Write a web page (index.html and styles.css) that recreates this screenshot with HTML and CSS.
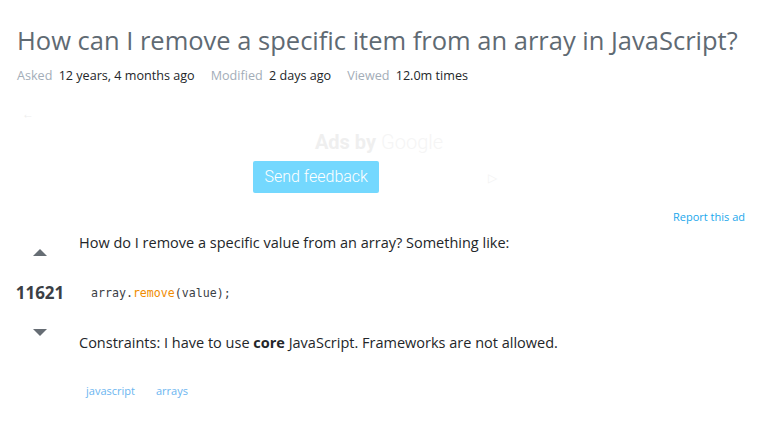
FILE: index.html
```html
<!DOCTYPE html>
<html>
<head>
<meta charset="utf-8">
<link rel="stylesheet" href="styles.css">
</head>
<body>
<div class="page">
  <h1 class="title">How can I remove a specific item from an array in JavaScript?</h1>
  <div class="meta">
    <span class="meta-item"><span class="label">Asked</span> 12 years, 4 months ago</span>
    <span class="meta-item"><span class="label">Modified</span> 2 days ago</span>
    <span class="meta-item"><span class="label">Viewed</span> 12.0m times</span>
  </div>
  <div class="ad">
    <div class="ad-back">&#8592;</div>
    <div class="ads-by"><b>Ads by</b> <span class="google">Google</span></div>
    <div class="ad-row">
      <span class="feedback">Send feedback</span>
      <span class="play">&#9655;</span>
    </div>
    <div class="report-row"><span class="report">Report this ad</span></div>
  </div>
  <div class="post">
    <div class="votecell">
      <span class="tri up"></span>
      <span class="count">11621</span>
      <span class="tri down"></span>
    </div>
    <div class="postbody">
      <p class="line">How do I remove a specific value from an array? Something like:</p>
      <pre class="code">array.<span class="fn">remove</span>(value);</pre>
      <p class="line">Constraints: I have to use <b>core</b> JavaScript. Frameworks are not allowed.</p>
      <div class="tags"><span class="tag">javascript</span><span class="tag">arrays</span></div>
    </div>
  </div>
</div>
</body>
</html>
```
FILE: styles.css
```css
html, body { margin: 0; padding: 0; background: #fff; }
body { font-family: "Open Sans", "Noto Sans", sans-serif; color: #232629; }
.page { padding: 20px 0 0 17px; width: 752px; box-sizing: border-box; }
.title { margin: 0; font-weight: 400; font-size: 25.5px; line-height: 40px; color: #5f6a73; white-space: nowrap; }
.meta { display: flex; gap: 16px; font-size: 12.6px; line-height: 30px; margin-top: 1px; }
.meta .label { color: #a3adb8; margin-right: 3px; }
.ad { position: relative; height: 137px; display: flex; flex-direction: column; }
.ad-back { position: absolute; left: 5px; top: 14px; color: #ededed; font-size: 12px; }
.ads-by { font-family: Roboto, sans-serif; font-size: 20px; color: #efefef; line-height: 24px; margin-top: 39px; text-align: center; padding-right: 11px; }
.ads-by b { font-weight: 700; }
.google { color: #f5f5f5; font-weight: 300; }
.ad-row { display: flex; align-items: center; margin-top: 7px; padding-left: 236px; gap: 109px; }
.feedback { display: block; background: #74d8fe; color: #fff; font-family: Roboto, sans-serif; font-weight: 300; font-size: 16px; line-height: 32px; padding: 0 11.5px; border-radius: 2px; }
.play { color: #f3f3f3; font-size: 12px; }
.report-row { display: flex; justify-content: flex-end; margin-top: auto; padding-right: 7px; padding-bottom: 4px; }
.report { font-size: 11px; color: #1aa7ec; }
.post { display: flex; }
.votecell { width: 46px; display: flex; flex-direction: column; align-items: center; padding-top: 21px; margin-right: 16px; }
.tri { width: 0; height: 0; border-left: 7px solid transparent; border-right: 7px solid transparent; }
.tri.up { border-bottom: 7px solid #666d74; }
.tri.down { border-top: 7px solid #666d74; margin-top: 24px; }
.count { font-size: 17px; font-weight: 700; color: #3b4045; margin-top: 25px; line-height: 24px; }
.postbody { font-size: 14.5px; }
.line { margin: 0; line-height: 22px; }
.postbody p:first-child { margin-top: 4px; }
.code { font-family: "DejaVu Sans Mono", monospace; font-size: 11.6px; color: #3b4045; margin: 31px 0 30px 12px; line-height: 17px; }
.fn { color: #f08c00; }
.tags { display: flex; gap: 21px; margin-top: 29px; padding-left: 7px; }
.tag { font-size: 11px; color: #6bb5f0; }
```
